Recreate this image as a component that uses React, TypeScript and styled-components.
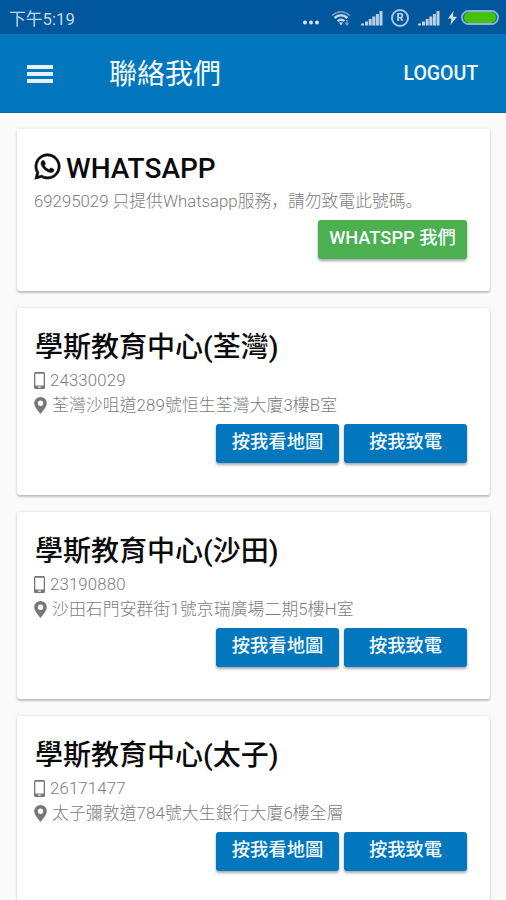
import React from "react";
import styled, { createGlobalStyle } from "styled-components";
import { FaWhatsapp } from "react-icons/fa";

const GlobalStyle = createGlobalStyle`
  * { box-sizing: border-box; }
  html, body { margin: 0; height: 100%; overflow: hidden; }
  body {
    background: #fafafa;
    font-family: Roboto, "Noto Sans CJK TC", sans-serif;
  }
`;

const Screen = styled.div`
  height: 900px;
  width: 506px;
  overflow: hidden;
`;

const StatusBar = styled.div`
  display: flex;
  align-items: center;
  justify-content: space-between;
  height: 34px;
  padding: 0 7px 0 9px;
  background: #01579b;
  color: #c3d8ec;
`;

const Clock = styled.span`
  font-size: 16.8px;
  line-height: 34px;
  padding-top: 4px;
`;

const StatusIcons = styled.div`
  display: flex;
  align-items: center;
  height: 34px;
`;

const StatusIcon = styled.svg<{ $gap: number }>`
  display: block;
  flex: none;
  margin-top: 2px;
  margin-right: ${(p) => p.$gap}px;
`;

const Roaming = styled.span`
  display: flex;
  align-items: center;
  justify-content: center;
  width: 18px;
  height: 18px;
  margin: 1px 9px 0 0;
  border: 2px solid #a9c5e0;
  border-radius: 50%;
  font-size: 11px;
  line-height: 14px;
  font-weight: 700;
`;

const Battery = styled.div`
  width: 38px;
  height: 15px;
  margin-top: 1px;
  padding: 0 1px;
  border: 2px solid #8db4d8;
  border-radius: 8px;
`;

const Charge = styled.div`
  height: 11px;
  border-radius: 5px;
  background: #43c10b;
`;

const Toolbar = styled.header`
  display: flex;
  align-items: center;
  height: 79px;
  padding: 0 28px 0 27px;
  background: #0277bd;
  border-bottom: 1px solid #0a6aa8;
  color: #f3f9ff;
`;

const MenuButton = styled.button`
  display: flex;
  flex-direction: column;
  gap: 3px;
  width: 26px;
  margin: 1px 56px 0 0;
  padding: 0;
  border: 0;
  background: none;
`;

const MenuLine = styled.span`
  height: 4px;
  background: #e6f1fa;
`;

const PageTitle = styled.h1`
  flex: 1;
  margin: 0;
  padding-top: 3px;
  font-size: 28px;
  font-weight: 400;
  line-height: 40px;
`;

const Logout = styled.button`
  padding: 1px 0 0;
  border: 0;
  background: none;
  color: inherit;
  font: 500 19.6px/28px Roboto, sans-serif;
  letter-spacing: -0.1px;
`;

const CardList = styled.main`
  display: flex;
  flex-direction: column;
  gap: 17px;
  padding: 16px 16px 0 17px;
`;

const Card = styled.section`
  padding: 21px 23px 32px 17px;
  border-radius: 3px;
  background: #fff;
  box-shadow: 0 2px 2px rgba(0, 0, 0, 0.2), 0 0 3px rgba(0, 0, 0, 0.12);
`;

const CardTitle = styled.h2<{ $inset?: number }>`
  display: flex;
  align-items: center;
  height: 36px;
  margin: 0 0 3px;
  padding: 2px 0 0 ${(p) => p.$inset ?? 0}px;
  color: #0b0b0b;
  font-size: 28px;
  font-weight: 500;
  line-height: 36px;
  white-space: nowrap;
  svg {
    flex: none;
    margin: 0 4px 5px -1px;
    stroke: currentColor;
    stroke-width: 12px;
  }
`;

const InfoLine = styled.div<{ $gap?: number }>`
  display: flex;
  align-items: center;
  gap: ${(p) => p.$gap ?? 0}px;
  height: 25px;
  color: #7c7c7c;
  font-size: 16.8px;
  font-weight: 300;
  line-height: 25px;
  letter-spacing: 0.14px;
  white-space: nowrap;
  svg { flex: none; }
`;

const Notice = styled.span`
  font-family: Roboto, "Noto Sans CJK JP", sans-serif;
  letter-spacing: 0;
`;

const Actions = styled.div`
  display: flex;
  justify-content: flex-end;
  gap: 5px;
  margin-top: 6px;
`;

const ActionButton = styled.button<{ $color: string; $width: number }>`
  width: ${(p) => p.$width}px;
  height: 39px;
  padding: 0 0 3px;
  border: 0;
  border-radius: 3px;
  background: ${(p) => p.$color};
  box-shadow: 0 2px 3px rgba(0, 0, 0, 0.35);
  color: #f5faff;
  font: 500 18.3px/36px Roboto, "Noto Sans CJK TC", sans-serif;
  white-space: nowrap;
`;

const Signal = ({ gap }: { gap: number }) => (
  <StatusIcon $gap={gap} width="22" height="16" viewBox="0 0 22 16" fill="#b9d0e6">
    <path d="M0 13.500h3V15.500H0zM4 11.500h3v4H4zM7.700 9h3v6.500h-3zM11.300 6.500h3v9h-3zM14.900 4h3v11.500h-3zM18.500 1h3v14.500h-3z" />
  </StatusIcon>
);

const PhoneIcon = () => (
  <svg width="11" height="17" viewBox="0 0 11 17">
    <path
      fill="#777"
      fillRule="evenodd"
      d="M1.500 0h8A1.500 1.500 0 0 1 11 1.500v14A1.500 1.500 0 0 1 9.500 17h-8A1.500 1.500 0 0 1 0 15.500v-14A1.500 1.500 0 0 1 1.500 0zM1.300 1.800v11.700h8.400V1.800zM4.200 14.500v1.200h2.600v-1.200z"
    />
  </svg>
);

const PinIcon = () => (
  <svg width="13" height="17" viewBox="0 0 13 17">
    <path
      fill="#777"
      fillRule="evenodd"
      d="M6.500 0A6.300 6.300 0 0 1 12.800 6.300C12.800 9.500 9 14 6.500 17C4 14 .2 9.500 .2 6.300A6.300 6.300 0 0 1 6.500 0zM6.500 3.500a2.700 2.700 0 1 0 0 5.400a2.700 2.700 0 0 0 0-5.400z"
    />
  </svg>
);

const centres = [
  { name: "學斯教育中心(荃灣)", phone: "24330029", address: "荃灣沙咀道289號恒生荃灣大廈3樓B室" },
  { name: "學斯教育中心(沙田)", phone: "23190880", address: "沙田石門安群街1號京瑞廣場二期5樓H室" },
  { name: "學斯教育中心(太子)", phone: "26171477", address: "太子彌敦道784號大生銀行大廈6樓全層" },
];

export default function App() {
  return (
    <Screen>
      <GlobalStyle />
      <StatusBar>
        <Clock>下午5:19</Clock>
        <StatusIcons>
          <StatusIcon $gap={11} width="18" height="16" viewBox="0 0 18 16" fill="#d5e4f2">
            <circle cx="3" cy="12.500" r="2" />
            <circle cx="9" cy="12.500" r="2" />
            <circle cx="15" cy="12.500" r="2" />
          </StatusIcon>
          <StatusIcon $gap={10} width="20" height="16" viewBox="0 0 20 16" fill="none" stroke="#c3d8ec">
            <path d="M1 5.500Q10-2 19 5.500" strokeWidth="1.600" stroke="#6fa0cc" />
            <path d="M3.500 8Q10 2.500 16.500 8" strokeWidth="2.600" />
            <path d="M6.500 11.200Q10 8.200 13.500 11.200" strokeWidth="2.400" />
            <path d="M8 12.500h4l-2 3z" fill="#d5e4f2" stroke="none" />
            <path d="M16 10v5M14.500 13l1.500 2 1.500-2" strokeWidth="1.300" stroke="#6fa0cc" />
          </StatusIcon>
          <Signal gap={8} />
          <Roaming>R</Roaming>
          <Signal gap={8} />
          <StatusIcon $gap={4} width="9" height="14" viewBox="0 0 9 14" fill="#d5e4f2">
            <path d="M5.500 0L0 7.500h3.500L2.500 14L9 5.800H5z" />
          </StatusIcon>
          <Battery>
            <Charge />
          </Battery>
        </StatusIcons>
      </StatusBar>
      <Toolbar>
        <MenuButton aria-label="Menu">
          <MenuLine />
          <MenuLine />
          <MenuLine />
        </MenuButton>
        <PageTitle>聯絡我們</PageTitle>
        <Logout>LOGOUT</Logout>
      </Toolbar>
      <CardList>
        <Card>
          <CardTitle>
            <FaWhatsapp size={29} />
            WHATSAPP
          </CardTitle>
          <InfoLine>
            <Notice lang="ja">69295029 只提供Whatsapp服務，請勿致電此號碼。</Notice>
          </InfoLine>
          <Actions>
            <ActionButton $color="#4caf50" $width={149}>
              WHATSPP 我們
            </ActionButton>
          </Actions>
        </Card>
        {centres.map((c) => (
          <Card key={c.phone}>
            <CardTitle $inset={1}>{c.name}</CardTitle>
            <InfoLine $gap={5}>
              <PhoneIcon />
              {c.phone}
            </InfoLine>
            <InfoLine $gap={5}>
              <PinIcon />
              {c.address}
            </InfoLine>
            <Actions>
              <ActionButton $color="#0277bd" $width={123}>
                按我看地圖
              </ActionButton>
              <ActionButton $color="#0277bd" $width={123}>
                按我致電
              </ActionButton>
            </Actions>
          </Card>
        ))}
      </CardList>
    </Screen>
  );
}
